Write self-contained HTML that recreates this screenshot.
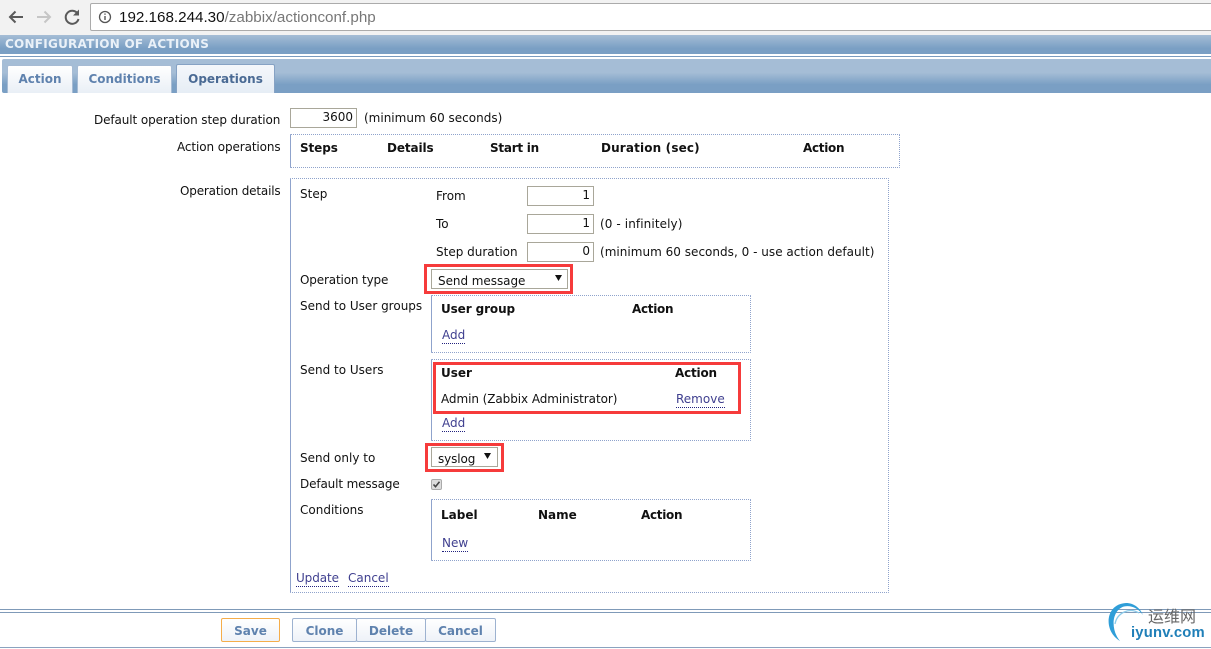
<!DOCTYPE html>
<html><head><meta charset="utf-8"><style>
html,body{margin:0;padding:0;background:#fff}
#p{position:relative;width:1211px;height:649px;overflow:hidden;background:#fff;font:12px/16px "DejaVu Sans",sans-serif;color:#111}
#p div,#p span.a{position:absolute;white-space:nowrap}
.b{font-weight:bold}
.lk{color:#3f3f8f;border-bottom:1px dotted #22227f;line-height:15px}
.box{border:1px dotted #8fa3cc;box-sizing:border-box;border-left-style:solid;border-radius:1px}
.in{border:1px solid #a9a79a;box-sizing:border-box;height:20px;background:#fff;text-align:right;padding-right:3px;line-height:17px}
.red{border:3px solid #f63b3b;box-sizing:border-box}
.tab{box-sizing:border-box;height:28px;background:linear-gradient(#fff,#e9eff6);border:1px solid #a6bbd4;border-bottom:0;font-weight:bold;color:#5f82ae;font-size:12px;text-align:center;line-height:27px;border-radius:2px 2px 0 0}
.btn{box-sizing:border-box;height:24px;top:618px;background:linear-gradient(#fff,#eef2f8);border:1px solid #9db2d0;font-weight:bold;color:#5f82ae;font-size:12px;text-align:center;line-height:24px;border-radius:2px}
</style></head><body><div id="p">
<div style="left:0;top:0;width:1211px;height:35px;background:#f2f2f2"></div>
<div style="left:90px;top:3px;width:1125px;height:28px;box-sizing:border-box;background:#fff;border:1px solid #ababab;border-radius:2px"></div>
<svg style="position:absolute;left:0;top:0" width="120" height="35" fill="none">
<path d="M23 17H10M15.500 11.500L10 17l5.500 5.500" stroke="#5a5a5a" stroke-width="2"/>
<path d="M37 17h13M44.500 11.500L50 17l-5.500 5.500" stroke="#c6c6c6" stroke-width="2"/>
<path d="M77.500 13.500A6.500 6.500 0 1 0 78.500 19" stroke="#5a5a5a" stroke-width="2"/>
<path d="M79 9.500v6h-6z" fill="#5a5a5a"/>
<circle cx="105" cy="17" r="5.500" stroke="#555" stroke-width="1.300"/>
<path d="M105 16v4M105 13.500v1.300" stroke="#555" stroke-width="1.400"/>
</svg>
<div style="left:119px;top:9px;font:15.200px/18px 'Liberation Sans',sans-serif;color:#777"><span style="color:#111">192.168.244.30</span>/zabbix/actionconf.php</div>

<div style="left:0;top:35px;width:1211px;height:19px;background:linear-gradient(#a5bdd6,#7a9fc4 70%)"></div>
<div style="left:5px;top:36px;font-weight:bold;font-size:12px;line-height:16px;color:#eaf1f8;letter-spacing:.25px">CONFIGURATION OF ACTIONS</div>
<div style="left:0;top:56px;width:1211px;height:1px;background:#7a9bbf"></div>
<div style="left:2px;top:59px;width:1209px;height:34px;background:linear-gradient(#a5bdd6 0,#a5bdd6 40%,#7a9fc4 75%);border-radius:2px 0 0 2px"></div>
<div class="tab" style="left:7px;top:65px;width:66px">Action</div>
<div class="tab" style="left:77px;top:65px;width:95px">Conditions</div>
<div class="tab" style="left:176px;top:64px;width:99px;height:29px;background:linear-gradient(#f4f7fb,#e6edf5);color:#4a6a94;border-color:#86a2c4;line-height:29px">Operations</div>

<div style="left:94px;top:112px;letter-spacing:-.1px">Default operation step duration</div>
<div class="in" style="left:290px;top:108px;width:67px">3600</div>
<div style="left:364px;top:110px">(minimum 60 seconds)</div>
<div style="left:177px;top:139px;letter-spacing:-.1px">Action operations</div>
<div class="box" style="left:290px;top:134px;width:610px;height:34px"></div>
<div class="b" style="left:300px;top:140px;letter-spacing:-.1px">Steps</div>
<div class="b" style="left:387px;top:140px;letter-spacing:-.1px">Details</div>
<div class="b" style="left:490px;top:140px;letter-spacing:-.25px">Start in</div>
<div class="b" style="left:601px;top:140px;letter-spacing:.15px">Duration (sec)</div>
<div class="b" style="left:803px;top:140px;letter-spacing:-.3px">Action</div>

<div style="left:180px;top:183px;letter-spacing:-.18px">Operation details</div>
<div class="box" style="left:290px;top:178px;width:599px;height:415px"></div>
<div style="left:300px;top:186px">Step</div>
<div style="left:436px;top:188px">From</div>
<div class="in" style="left:527px;top:186px;width:67px">1</div>
<div style="left:436px;top:216px">To</div>
<div class="in" style="left:527px;top:214px;width:67px">1</div>
<div style="left:600px;top:216px;letter-spacing:.1px">(0 - infinitely)</div>
<div style="left:436px;top:244px">Step duration</div>
<div class="in" style="left:527px;top:242px;width:67px">0</div>
<div style="left:600px;top:244px;letter-spacing:.02px">(minimum 60 seconds, 0 - use action default)</div>

<div style="left:300px;top:272px;letter-spacing:-.15px">Operation type</div>
<div class="red" style="left:424px;top:264px;width:149px;height:30px"></div>
<div class="in" style="left:431px;top:269px;width:137px;height:20px;text-align:left;padding-left:6px;overflow:hidden;line-height:22px;letter-spacing:-.05px">Send message</div>
<svg style="position:absolute;left:555px;top:275px" width="8" height="7"><path d="M0 0h7L3.500 6z" fill="#111"/></svg>

<div style="left:300px;top:298px">Send to User groups</div>
<div class="box" style="left:431px;top:295px;width:320px;height:58px"></div>
<div class="b" style="left:441px;top:301px;letter-spacing:-.1px">User group</div>
<div class="b" style="left:632px;top:301px;letter-spacing:-.3px">Action</div>
<div class="lk" style="left:442px;top:328px">Add</div>

<div style="left:300px;top:362px">Send to Users</div>
<div class="box" style="left:431px;top:359px;width:320px;height:82px"></div>
<div class="red" style="left:433px;top:362px;width:308px;height:52px"></div>
<div class="b" style="left:441px;top:365px">User</div>
<div class="b" style="left:675px;top:365px;letter-spacing:-.2px">Action</div>
<div style="left:441px;top:391px;letter-spacing:-.07px">Admin (Zabbix Administrator)</div>
<div class="lk" style="left:676px;top:392px">Remove</div>
<div class="lk" style="left:442px;top:416px">Add</div>

<div style="left:300px;top:450px">Send only to</div>
<div class="red" style="left:425px;top:443px;width:79px;height:29px"></div>
<div class="in" style="left:431px;top:447px;width:67px;height:20px;text-align:left;padding-left:6px;overflow:hidden;line-height:22px;letter-spacing:-.1px">syslog</div>
<svg style="position:absolute;left:484px;top:453px" width="8" height="7"><path d="M0 0h7L3.500 6z" fill="#111"/></svg>

<div style="left:300px;top:476px;letter-spacing:-.13px">Default message</div>
<svg style="position:absolute;left:431px;top:479px" width="12" height="12" fill="none"><rect x=".5" y=".5" width="10" height="10" rx="1.500" fill="#ddd" stroke="#aaa"/><path d="M2.500 5.500l2 2.200 4-5" stroke="#444" stroke-width="1.600"/></svg>

<div style="left:300px;top:502px">Conditions</div>
<div class="box" style="left:431px;top:499px;width:320px;height:62px"></div>
<div class="b" style="left:441px;top:507px">Label</div>
<div class="b" style="left:538px;top:507px">Name</div>
<div class="b" style="left:641px;top:507px;letter-spacing:-.3px">Action</div>
<div class="lk" style="left:442px;top:536px">New</div>

<div class="lk" style="left:296px;top:571px;letter-spacing:-.1px">Update</div>
<div class="lk" style="left:348px;top:571px">Cancel</div>

<div style="left:0;top:609px;width:1211px;height:1px;background:#7f9ab8"></div>
<div style="left:0;top:612px;width:1211px;height:1px;background:#7f9ab8"></div>
<div style="left:0;top:647px;width:1211px;height:1px;background:#8aa3bf"></div>
<div class="btn" style="left:221px;width:59px;border-color:#f5ad4a">Save</div>
<div class="btn" style="left:292px;width:65px">Clone</div>
<div class="btn" style="left:356px;width:70px">Delete</div>
<div class="btn" style="left:425px;width:71px">Cancel</div>

<svg style="position:absolute;left:1104px;top:600px" width="50" height="45" fill="none">
<path d="M16 41C-1 31 1 4 22 3C30 3 36 8 39 15C34 8 27 5 20 6.500C8 10 6 29 16 41z" fill="#2f9ed8"/>
<path d="M11 24C13 13 25 7 35 13" stroke="#8ccbea" stroke-width="1.300"/>
</svg>
<div style="left:1148px;top:606px;font:16px/18px 'Noto Sans CJK SC',sans-serif;color:#666">运维网</div>
<div style="left:1131px;top:624px;font:bold 14.800px/18px 'Liberation Sans',sans-serif;color:#1f7fb8;letter-spacing:.2px">iyunv.com</div>
</div></body></html>
